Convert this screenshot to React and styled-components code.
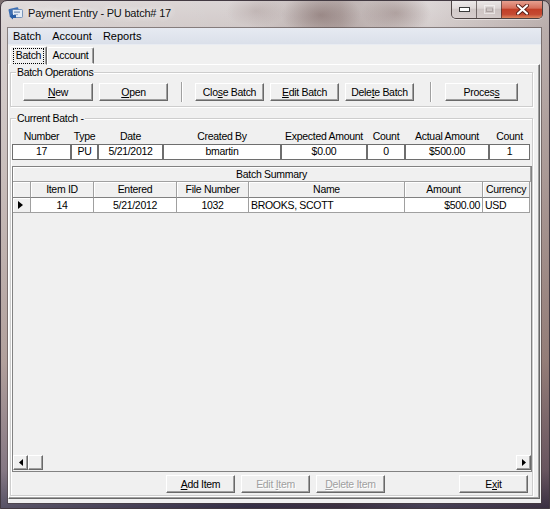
import React from 'react';
import styled, { createGlobalStyle } from 'styled-components';

const GlobalStyle = createGlobalStyle`
  html, body {
    margin: 0;
    padding: 0;
    background: #7d6f70;
  }
  body {
    font-family: "Liberation Sans", Arial, sans-serif;
    color: #000;
  }
`;

const Window = styled.div`
  width: 550px;
  height: 509px;
  box-sizing: border-box;
  display: flex;
  flex-direction: column;
  padding: 0 8px 5px 7px;
  border: 1px solid #433a42;
  border-radius: 7px 7px 0 0;
  overflow: hidden;
  background:
    radial-gradient(ellipse 40px 22px at 320px 14px, rgba(110, 85, 82, 0.45), rgba(110, 85, 82, 0) 100%),
    radial-gradient(ellipse 35px 20px at 395px 12px, rgba(120, 95, 92, 0.35), rgba(120, 95, 92, 0) 100%),
    radial-gradient(ellipse 30px 16px at 255px 10px, rgba(150, 130, 128, 0.3), rgba(150, 130, 128, 0) 100%),
    linear-gradient(to right, rgba(255, 255, 255, 0.18), rgba(255, 255, 255, 0) 45%, rgba(80, 50, 45, 0.22) 62%, rgba(255, 255, 255, 0.08) 78%, rgba(90, 60, 55, 0.2) 100%),
    linear-gradient(180deg, #dad4d4 0px, #d0c8c7 30px, #bcaeab 180px, #a18c87 360px, #6a5a68 470px, #2f2a42 509px);
`;

const TitleBar = styled.div`
  height: 27px;
  display: flex;
  align-items: flex-start;
  flex-shrink: 0;
`;

const TitleIcon = styled.svg`
  width: 16px;
  height: 16px;
  margin-top: 3px;
`;

const TitleText = styled.span`
  margin: 4px 0 0 4px;
  font-size: 11px;
  letter-spacing: -0.2px;
  line-height: 16px;
  color: #111;
  text-shadow: 0 0 6px rgba(255, 255, 255, 0.95), 0 0 10px rgba(255, 255, 255, 0.8);
`;

const Controls = styled.div`
  display: flex;
  height: 18px;
  margin: -1px -2px 0 auto;
  border: 1px solid rgba(45, 35, 35, 0.8);
  border-top: none;
  border-radius: 0 0 5px 5px;
  overflow: hidden;
  box-shadow: 0 1px 0 rgba(255, 255, 255, 0.45);
`;

const CtlButton = styled.div`
  width: ${p => p.$w}px;
  display: flex;
  align-items: center;
  justify-content: center;
  background: ${p => (p.$close
    ? 'linear-gradient(#e9a797 0%, #d6705c 45%, #c23f27 52%, #c44a32 80%, #dd8660 100%)'
    : 'linear-gradient(rgba(255,255,255,.6) 0%, rgba(245,240,240,.4) 45%, rgba(205,195,195,.3) 52%, rgba(225,215,215,.45) 100%)')};
  & + & {
    border-left: 1px solid rgba(60, 50, 50, 0.65);
  }
`;

const Client = styled.div`
  flex: 1;
  display: flex;
  flex-direction: column;
  background: #f0f0f0;
  box-shadow: 0 0 0 1px rgba(70, 60, 60, 0.55);
`;

const MenuBar = styled.div`
  height: 16px;
  display: flex;
  align-items: center;
  background: linear-gradient(#e6eaf2, #dbe0ea);
  border-bottom: 1px solid #e9ecf2;
  flex-shrink: 0;
`;

const MenuItem = styled.span`
  padding: 0 6px;
  margin-left: -1px;
  font-size: 11px;
  line-height: 16px;
`;

const TabStrip = styled.div`
  height: 19px;
  display: flex;
  align-items: flex-end;
  padding-left: 2px;
  flex-shrink: 0;
`;

const Tab = styled.div`
  position: relative;
  z-index: 1;
  box-sizing: border-box;
  height: ${p => (p.$active ? 19 : 17)}px;
  width: ${p => p.$w}px;
  margin-bottom: ${p => (p.$active ? -1 : 0)}px;
  padding: ${p => (p.$active ? '2px 1px 0 1px' : '1px 2px 0 2px')};
  display: flex;
  justify-content: center;
  font-size: 10.5px;
  letter-spacing: -0.3px;
  background: #f0f0f0;
  border: 1px solid;
  border-color: #fff #696969 transparent #fff;
  box-shadow: inset -1px 0 0 #a0a0a0;
  border-radius: 2px 2px 0 0;
`;

const TabLabel = styled.span`
  padding: 0 2px;
  line-height: 13px;
  height: 14px;
  outline: ${p => (p.$focus ? '1px dotted #000' : 'none')};
`;

const TabPanel = styled.div`
  flex: 1;
  display: flex;
  flex-direction: column;
  margin: 0 1px 4px 0;
  padding: 0 6px 2px 1px;
  border: 1px solid;
  border-color: #fff #696969 #696969 #fff;
  box-shadow: inset -1px -1px 0 #a0a0a0;
`;

const GroupBox = styled.div`
  position: relative;
  display: flex;
  flex-direction: column;
  flex: ${p => (p.$grow ? 1 : 'none')};
  margin-top: ${p => p.$top}px;
  border: 1px solid #cdcdcd;
  box-shadow: inset 1px 1px 0 #fff, 1px 1px 0 #fff;
`;

const GroupLabel = styled.span`
  position: absolute;
  top: -8px;
  left: 5px;
  padding: 0 1px;
  background: #f0f0f0;
  font-size: 10.5px;
  letter-spacing: -0.3px;
  line-height: 14px;
`;

const ButtonRow = styled.div`
  display: flex;
  align-items: center;
  gap: 6px;
  padding: ${p => p.$pad};
`;

const Button = styled.div`
  box-sizing: border-box;
  width: ${p => p.$w || 69}px;
  height: 18px;
  display: flex;
  align-items: center;
  justify-content: center;
  font-size: 10.5px;
  letter-spacing: -0.3px;
  background: #f0f0f0;
  border: 1px solid;
  border-color: #fff #696969 #696969 #fff;
  box-shadow: inset -1px -1px 0 #a0a0a0;
  color: ${p => (p.$disabled ? '#a0a0a0' : '#000')};
  text-shadow: ${p => (p.$disabled ? '1px 1px 0 #fff' : 'none')};
  margin-left: ${p => (p.$push ? 'auto' : '0')};
`;

const Separator = styled.div`
  width: 0;
  height: 20px;
  border-left: 1px solid #a0a0a0;
  border-right: 1px solid #fff;
  margin: 0 ${p => p.$r}px 0 ${p => p.$l}px;
`;

const fieldCols = '59px 27px 65px 118px 86px 38px 84px 41px';

const FieldGrid = styled.div`
  display: grid;
  grid-template-columns: ${fieldCols};
  margin: 11px 0 0 1px;
`;

const FieldLabel = styled.div`
  text-align: center;
  font-size: 10.5px;
  letter-spacing: -0.3px;
  line-height: 13px;
  white-space: nowrap;
`;

const FieldBox = styled.div`
  box-sizing: border-box;
  height: 16px;
  margin-top: 1px;
  background: #fff;
  border: 1px solid #6e6e6e;
  text-align: center;
  font-size: 10.5px;
  letter-spacing: -0.3px;
  line-height: 13px;
`;

const DataGrid = styled.div`
  flex: 1;
  display: flex;
  flex-direction: column;
  margin: 6px 0 0 1px;
  background: #f0f0f0;
  border: 1px solid #828282;
  font-size: 10.5px;
  letter-spacing: -0.3px;
`;

const Caption = styled.div`
  height: 15px;
  box-sizing: border-box;
  line-height: 14px;
  text-align: center;
  border-bottom: 1px solid #a0a0a0;
  border-right: 1px solid #a0a0a0;
  box-shadow: inset 1px 1px 0 #fff;
`;

const gridCols = '18px 63px 83px 72px 156px 78px 47px';

const GridRow = styled.div`
  display: grid;
  grid-template-columns: ${gridCols};
  height: ${p => p.$h}px;
`;

const HeadCell = styled.div`
  box-sizing: border-box;
  line-height: 14px;
  text-align: center;
  border-right: 1px solid #a0a0a0;
  border-bottom: 1px solid #808080;
  box-shadow: inset 1px 1px 0 #fff;
  white-space: nowrap;
  overflow: hidden;
`;

const RowHeader = styled.div`
  box-sizing: border-box;
  display: flex;
  align-items: center;
  padding-left: 5px;
  border-right: 1px solid #a0a0a0;
  border-bottom: 1px solid #a0a0a0;
  box-shadow: inset 1px 1px 0 #fff;
`;

const Cell = styled.div`
  box-sizing: border-box;
  background: #fff;
  padding: 0 2px;
  line-height: 14px;
  text-align: ${p => p.$align || 'center'};
  border-right: 1px solid #a0a0a0;
  border-bottom: 1px solid #a0a0a0;
  white-space: nowrap;
  overflow: hidden;
`;

const GridSpace = styled.div`
  flex: 1;
`;

const HScroll = styled.div`
  height: 15px;
  display: flex;
  margin-bottom: 1px;
`;

const ScrollButton = styled.div`
  box-sizing: border-box;
  width: 15px;
  height: 15px;
  display: flex;
  align-items: center;
  justify-content: center;
  background: #f0f0f0;
  border: 1px solid;
  border-color: #fff #696969 #696969 #fff;
  box-shadow: inset -1px -1px 0 #a0a0a0;
  margin-left: ${p => (p.$push ? 'auto' : '0')};
`;

const Arrow = ({ dir, w = 4, h = 7 }) => (
  <svg width={w} height={h} viewBox={`0 0 ${w} ${h}`}>
    {dir === 'left'
      ? <polygon points={`${w},0 0,${h / 2} ${w},${h}`} fill="#000" />
      : <polygon points={`0,0 ${w},${h / 2} 0,${h}`} fill="#000" />}
  </svg>
);

const AppIcon = () => (
  <TitleIcon viewBox="0 0 16 16">
    <rect x="1" y="4" width="10" height="8" rx="1" fill="#3d6fb4" transform="rotate(-12 6 8)" />
    <rect x="4.5" y="5.5" width="10" height="8" rx="1" fill="#e4ecf6" stroke="#5a7fae" strokeWidth="0.8" />
    <rect x="6" y="7.5" width="6" height="1.2" fill="#6d8cb5" />
    <rect x="6" y="10" width="4" height="1.2" fill="#9fb3cf" />
    <path d="M1.5 12.5 L5 9.5 L5 11 L8 11 L8 14 L5 14 L5 15.5 Z" fill="#2b5fa6" />
  </TitleIcon>
);

const headers = ['Number', 'Type', 'Date', 'Created By', 'Expected Amount', 'Count', 'Actual Amount', 'Count'];
const values = ['17', 'PU', '5/21/2012', 'bmartin', '$0.00', '0', '$500.00', '1'];

export default function App() {
  return (
    <>
      <GlobalStyle />
      <Window>
        <TitleBar>
          <AppIcon />
          <TitleText>Payment Entry - PU batch# 17</TitleText>
          <Controls>
            <CtlButton $w={24}>
              <svg width="11" height="5" viewBox="0 0 11 5">
                <rect x="0.5" y="0.5" width="10" height="4" fill="#fff" stroke="#3a3a3a" />
              </svg>
            </CtlButton>
            <CtlButton $w={24}>
              <svg width="11" height="9" viewBox="0 0 11 9" opacity="0.5">
                <rect x="0.5" y="0.5" width="10" height="8" fill="none" stroke="#fff" />
                <rect x="2.5" y="3" width="6" height="3.5" fill="none" stroke="#8a8080" />
              </svg>
            </CtlButton>
            <CtlButton $w={40} $close>
              <svg width="13" height="11" viewBox="0 0 13 11">
                <path d="M2 1.5 L11 9.5 M11 1.5 L2 9.5" stroke="#5a2018" strokeWidth="4" strokeLinecap="round" />
                <path d="M2 1.5 L11 9.5 M11 1.5 L2 9.5" stroke="#fff" strokeWidth="2.2" strokeLinecap="round" />
              </svg>
            </CtlButton>
          </Controls>
        </TitleBar>

        <Client>
          <MenuBar>
            <MenuItem>Batch</MenuItem>
            <MenuItem>Account</MenuItem>
            <MenuItem>Reports</MenuItem>
          </MenuBar>

          <TabStrip>
            <Tab $active $w={37}><TabLabel $focus>Batch</TabLabel></Tab>
            <Tab $w={47}><TabLabel>Account</TabLabel></Tab>
          </TabStrip>

          <TabPanel>
            <GroupBox $top={7}>
              <GroupLabel>Batch Operations</GroupLabel>
              <ButtonRow $pad="9px 0 4px 12px">
                <Button $w={70}><span><u>N</u>ew</span></Button>
                <Button><span><u>O</u>pen</span></Button>
                <Separator $l={7} $r={6} />
                <Button><span>Clo<u>s</u>e Batch</span></Button>
                <Button><span><u>E</u>dit Batch</span></Button>
                <Button><span>Dele<u>t</u>e Batch</span></Button>
                <Separator $l={10} $r={7} />
                <Button $w={73}><span>Proces<u>s</u></span></Button>
              </ButtonRow>
            </GroupBox>

            <GroupBox $top={11} $grow>
              <GroupLabel>Current Batch -</GroupLabel>
              <FieldGrid>
                {headers.map((h, i) => <FieldLabel key={'h' + i}>{h}</FieldLabel>)}
                {values.map((v, i) => <FieldBox key={'v' + i}>{v}</FieldBox>)}
              </FieldGrid>

              <DataGrid>
                <Caption>Batch Summary</Caption>
                <GridRow $h={16}>
                  <HeadCell />
                  <HeadCell>Item ID</HeadCell>
                  <HeadCell>Entered</HeadCell>
                  <HeadCell>File Number</HeadCell>
                  <HeadCell>Name</HeadCell>
                  <HeadCell>Amount</HeadCell>
                  <HeadCell>Currency</HeadCell>
                </GridRow>
                <GridRow $h={15}>
                  <RowHeader><Arrow dir="right" w={5} h={8} /></RowHeader>
                  <Cell>14</Cell>
                  <Cell>5/21/2012</Cell>
                  <Cell>1032</Cell>
                  <Cell $align="left">BROOKS, SCOTT</Cell>
                  <Cell $align="right">$500.00</Cell>
                  <Cell $align="left">USD</Cell>
                </GridRow>
                <GridSpace />
                <HScroll>
                  <ScrollButton><Arrow dir="left" /></ScrollButton>
                  <ScrollButton />
                  <ScrollButton $push><Arrow dir="right" /></ScrollButton>
                </HScroll>
              </DataGrid>

              <ButtonRow $pad="3px 4px 2px 155px">
                <Button><span><u>A</u>dd Item</span></Button>
                <Button $disabled><span>Edit <u>I</u>tem</span></Button>
                <Button $disabled><span><u>D</u>elete Item</span></Button>
                <Button $push><span>E<u>x</u>it</span></Button>
              </ButtonRow>
            </GroupBox>
          </TabPanel>
        </Client>
      </Window>
    </>
  );
}
